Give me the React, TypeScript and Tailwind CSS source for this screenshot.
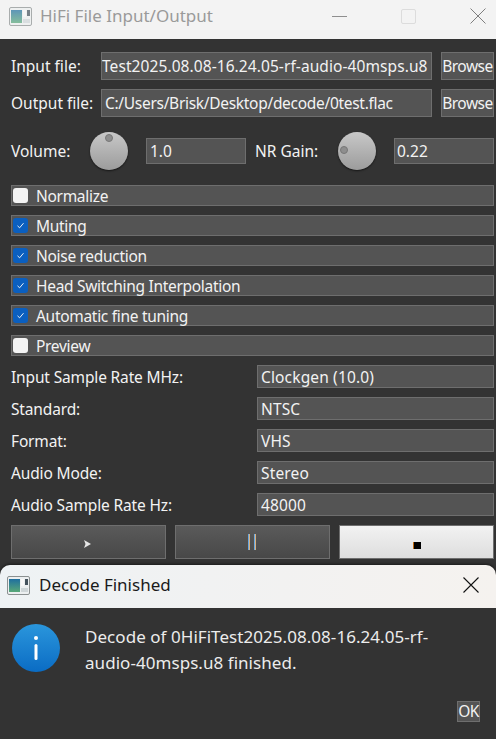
import React from 'react';

const boxClass = 'border border-[#6e6e6e] bg-[#545454] text-[#f2f2f2]';

const AppIcon = ({ id, faded }: { id: string; faded?: boolean }) => (
  <svg width="23" height="19" viewBox="0 0 23 19" className={faded ? 'opacity-70' : ''}>
    <defs>
      <linearGradient id={id} x1="0" y1="0" x2="0" y2="1">
        <stop offset="0" stopColor="#1f6f9f" />
        <stop offset="1" stopColor="#58a878" />
      </linearGradient>
    </defs>
    <rect x="0.5" y="0.5" width="22" height="18" rx="1.5" fill="#eceff0" stroke="#8b9090" />
    <rect x="2" y="3" width="11" height="13" fill={`url(#${id})`} />
    <rect x="14" y="3" width="3" height="7" fill="#f8f8f8" />
    <rect x="18" y="3" width="3" height="6" fill="#44525c" />
    <rect x="14" y="12" width="7" height="4" fill="#cfd6d8" />
  </svg>
);

const Knob = ({ dot }: { dot: 'top' | 'left' }) => (
  <div className="relative h-[38px] w-[38px] rounded-full bg-gradient-to-b from-[#c8c8c8] to-[#9c9c9c] shadow-[0_1px_2px_rgba(0,0,0,0.6)]">
    {dot === 'top' ? (
      <div className="absolute left-[15px] top-[2px] h-[8px] w-[8px] rounded-full border border-[#777] bg-[#8e8e8e]" />
    ) : (
      <div className="absolute left-[2px] top-[14px] h-[8px] w-[8px] rounded-full border border-[#777] bg-[#8e8e8e]" />
    )}
  </div>
);

const CheckRow = ({ label, checked }: { label: string; checked: boolean }) => (
  <div className={`flex h-[21px] items-center ${boxClass}`}>
    {checked ? (
      <div className="ml-[1px] flex h-[15px] w-[15px] items-center justify-center rounded-[3px] bg-[#0a5fc0]">
        <svg width="9" height="9" viewBox="0 0 9 9" fill="none" stroke="#e8f0fa" strokeWidth="1">
          <path d="M1.5 4.8 L3.6 6.8 L7.5 2.2" />
        </svg>
      </div>
    ) : (
      <div className="ml-[1px] h-[15px] w-[15px] rounded-[3px] bg-[#f4f4f4]" />
    )}
    <span className="ml-[8px] pt-[2px] leading-none tracking-[-0.3px]">{label}</span>
  </div>
);

const ComboRow = ({ label, value }: { label: string; value: string }) => (
  <div className="flex h-[23px] items-center">
    <span className="w-[246px] pt-[2px] text-[#f2f2f2] tracking-[-0.15px]">{label}</span>
    <div className={`flex h-full flex-1 items-center pl-[3px] pt-[2px] tracking-[0.15px] ${boxClass}`}>{value}</div>
  </div>
);

const FileRow = ({ label, value, pad }: { label: string; value: string; pad: string }) => (
  <div className="flex h-[28px] items-center">
    <span className="w-[90px] pt-[2px] text-[#f2f2f2]">{label}</span>
    <div className={`flex h-full w-[331px] items-center overflow-hidden whitespace-nowrap pt-[2px] ${pad} ${boxClass}`}>{value}</div>
    <div className={`ml-[9px] flex h-full w-[53px] items-center justify-center pt-[2px] tracking-[-0.5px] ${boxClass}`}>Browse</div>
  </div>
);

const PauseBar = () => <div className="h-[16px] w-[2px] border-l border-r border-l-[#6aa8e0] border-r-[#d8b080]" />;

export default function App() {
  return (
    <div className="h-[739px] w-[496px] overflow-hidden bg-[#333333] text-[15.5px] font-['Noto_Sans','Open_Sans',sans-serif]">
      <div className="flex h-[39px] items-center bg-[#f3f3f3] pb-[7px] pl-[9px]">
        <AppIcon id="paneMain" faded />
        <span className="ml-[8px] text-[17px] text-[#9a9a9a]">HiFi File Input/Output</span>
        <div className="ml-auto flex items-center">
          <div className="h-[1px] w-[15px] bg-[#8e8e8e]" />
          <div className="ml-[54px] h-[15px] w-[15px] rounded-[2px] border border-[#dcdcdc]" />
          <svg className="ml-[54px] mr-[10px]" width="16" height="16" viewBox="0 0 16 16" stroke="#7e7e7e" strokeWidth="1">
            <path d="M0.5 0.5 L15.5 15.5 M15.5 0.5 L0.5 15.5" />
          </svg>
        </div>
      </div>

      <div className="flex flex-col px-[11px] pr-[2px] pt-[13px]">
        <div className="flex flex-col gap-[9px]">
          <FileRow label="Input file:" value="Test2025.08.08-16.24.05-rf-audio-40msps.u8" pad="tracking-[0.08px]" />
          <FileRow label="Output file:" value="C:/Users/Brisk/Desktop/decode/0test.flac" pad="pl-[3px] tracking-[-0.3px]" />
        </div>

        <div className="mt-[15px] flex h-[38px] items-center text-[#f2f2f2]">
          <span className="w-[79px] pt-[2px]">Volume:</span>
          <Knob dot="top" />
          <div className={`ml-[18px] flex h-[26px] w-[100px] items-center pl-[3px] pt-[2px] ${boxClass}`}>1.0</div>
          <span className="ml-[9px] w-[83px] pt-[2px]">NR Gain:</span>
          <Knob dot="left" />
          <div className={`ml-[18px] flex h-[26px] w-[100px] items-center pl-[2px] pt-[2px] ${boxClass}`}>0.22</div>
        </div>

        <div className="mt-[15px] flex flex-col gap-[9px]">
          <CheckRow label="Normalize" checked={false} />
          <CheckRow label="Muting" checked />
          <CheckRow label="Noise reduction" checked />
          <CheckRow label="Head Switching Interpolation" checked />
          <CheckRow label="Automatic fine tuning" checked />
          <CheckRow label="Preview" checked={false} />
        </div>

        <div className="mt-[9px] flex flex-col gap-[9px]">
          <ComboRow label="Input Sample Rate MHz:" value="Clockgen (10.0)" />
          <ComboRow label="Standard:" value="NTSC" />
          <ComboRow label="Format:" value="VHS" />
          <ComboRow label="Audio Mode:" value="Stereo" />
          <ComboRow label="Audio Sample Rate Hz:" value="48000" />
        </div>

        <div className="mt-[9px] grid h-[34px] grid-cols-3 gap-[9px]">
          <div className="flex items-center justify-center border border-[#6e6e6e] bg-gradient-to-b from-[#5a5a5a] to-[#484848]">
            <svg width="7" height="8" viewBox="0 0 7 8" className="mr-[2px] mt-[3px]">
              <path d="M0 0 L7 4 L0 8 L1.5 4 Z" fill="#e6e6e6" />
            </svg>
          </div>
          <div className="flex items-center justify-center gap-[4px] border border-[#6e6e6e] bg-gradient-to-b from-[#5a5a5a] to-[#484848] pr-[2px]">
            <PauseBar />
            <PauseBar />
          </div>
          <div className="flex items-center justify-center border border-[#6e6e6e] bg-gradient-to-b from-[#f2f2f2] to-[#dedede]">
            <div className="mt-[6px] h-[7px] w-[8px] border-l border-[#c06a10] bg-black" />
          </div>
        </div>
      </div>

      <div className="mt-[6px] h-[174px] overflow-hidden rounded-t-[10px] bg-[#333333] shadow-[0_-1px_3px_rgba(0,0,0,0.5)]">
        <div className="flex h-[43px] items-center bg-gradient-to-r from-[#eef2f4] to-[#f5f2ef] pb-[3px] pl-[7px]">
          <AppIcon id="paneDialog" />
          <span className="ml-[9px] text-[17px] text-[#1a1a1a]">Decode Finished</span>
          <svg className="ml-auto mr-[17px]" width="16" height="16" viewBox="0 0 16 16" stroke="#111" strokeWidth="1.1">
            <path d="M0.5 0.5 L15.5 15.5 M15.5 0.5 L0.5 15.5" />
          </svg>
        </div>
        <div className="relative flex h-[131px] pl-[12px] pt-[16px]">
          <div className="relative flex h-[48px] w-[48px] shrink-0 items-center justify-center rounded-full bg-gradient-to-b from-[#2a96dc] to-[#0a6cc4]">
            <svg width="6" height="26" viewBox="0 0 6 26" fill="#fff">
              <circle cx="3" cy="3" r="2" />
              <rect x="1.5" y="9" width="3" height="16" rx="1.5" />
            </svg>
          </div>
          <p className="ml-[25px] w-[385px] text-[17px] leading-[26px] tracking-[0.05px] text-[#ececec]">
            Decode of 0HiFiTest2025.08.08-16.24.05-rf-
            <br />
            audio-40msps.u8 finished.
          </p>
          <div className="absolute bottom-[17px] right-[16px] flex h-[21px] w-[23px] items-center justify-center border border-[#6e6e6e] bg-[#545454] tracking-[-0.5px] text-[#f2f2f2]">
            OK
          </div>
        </div>
      </div>
    </div>
  );
}
